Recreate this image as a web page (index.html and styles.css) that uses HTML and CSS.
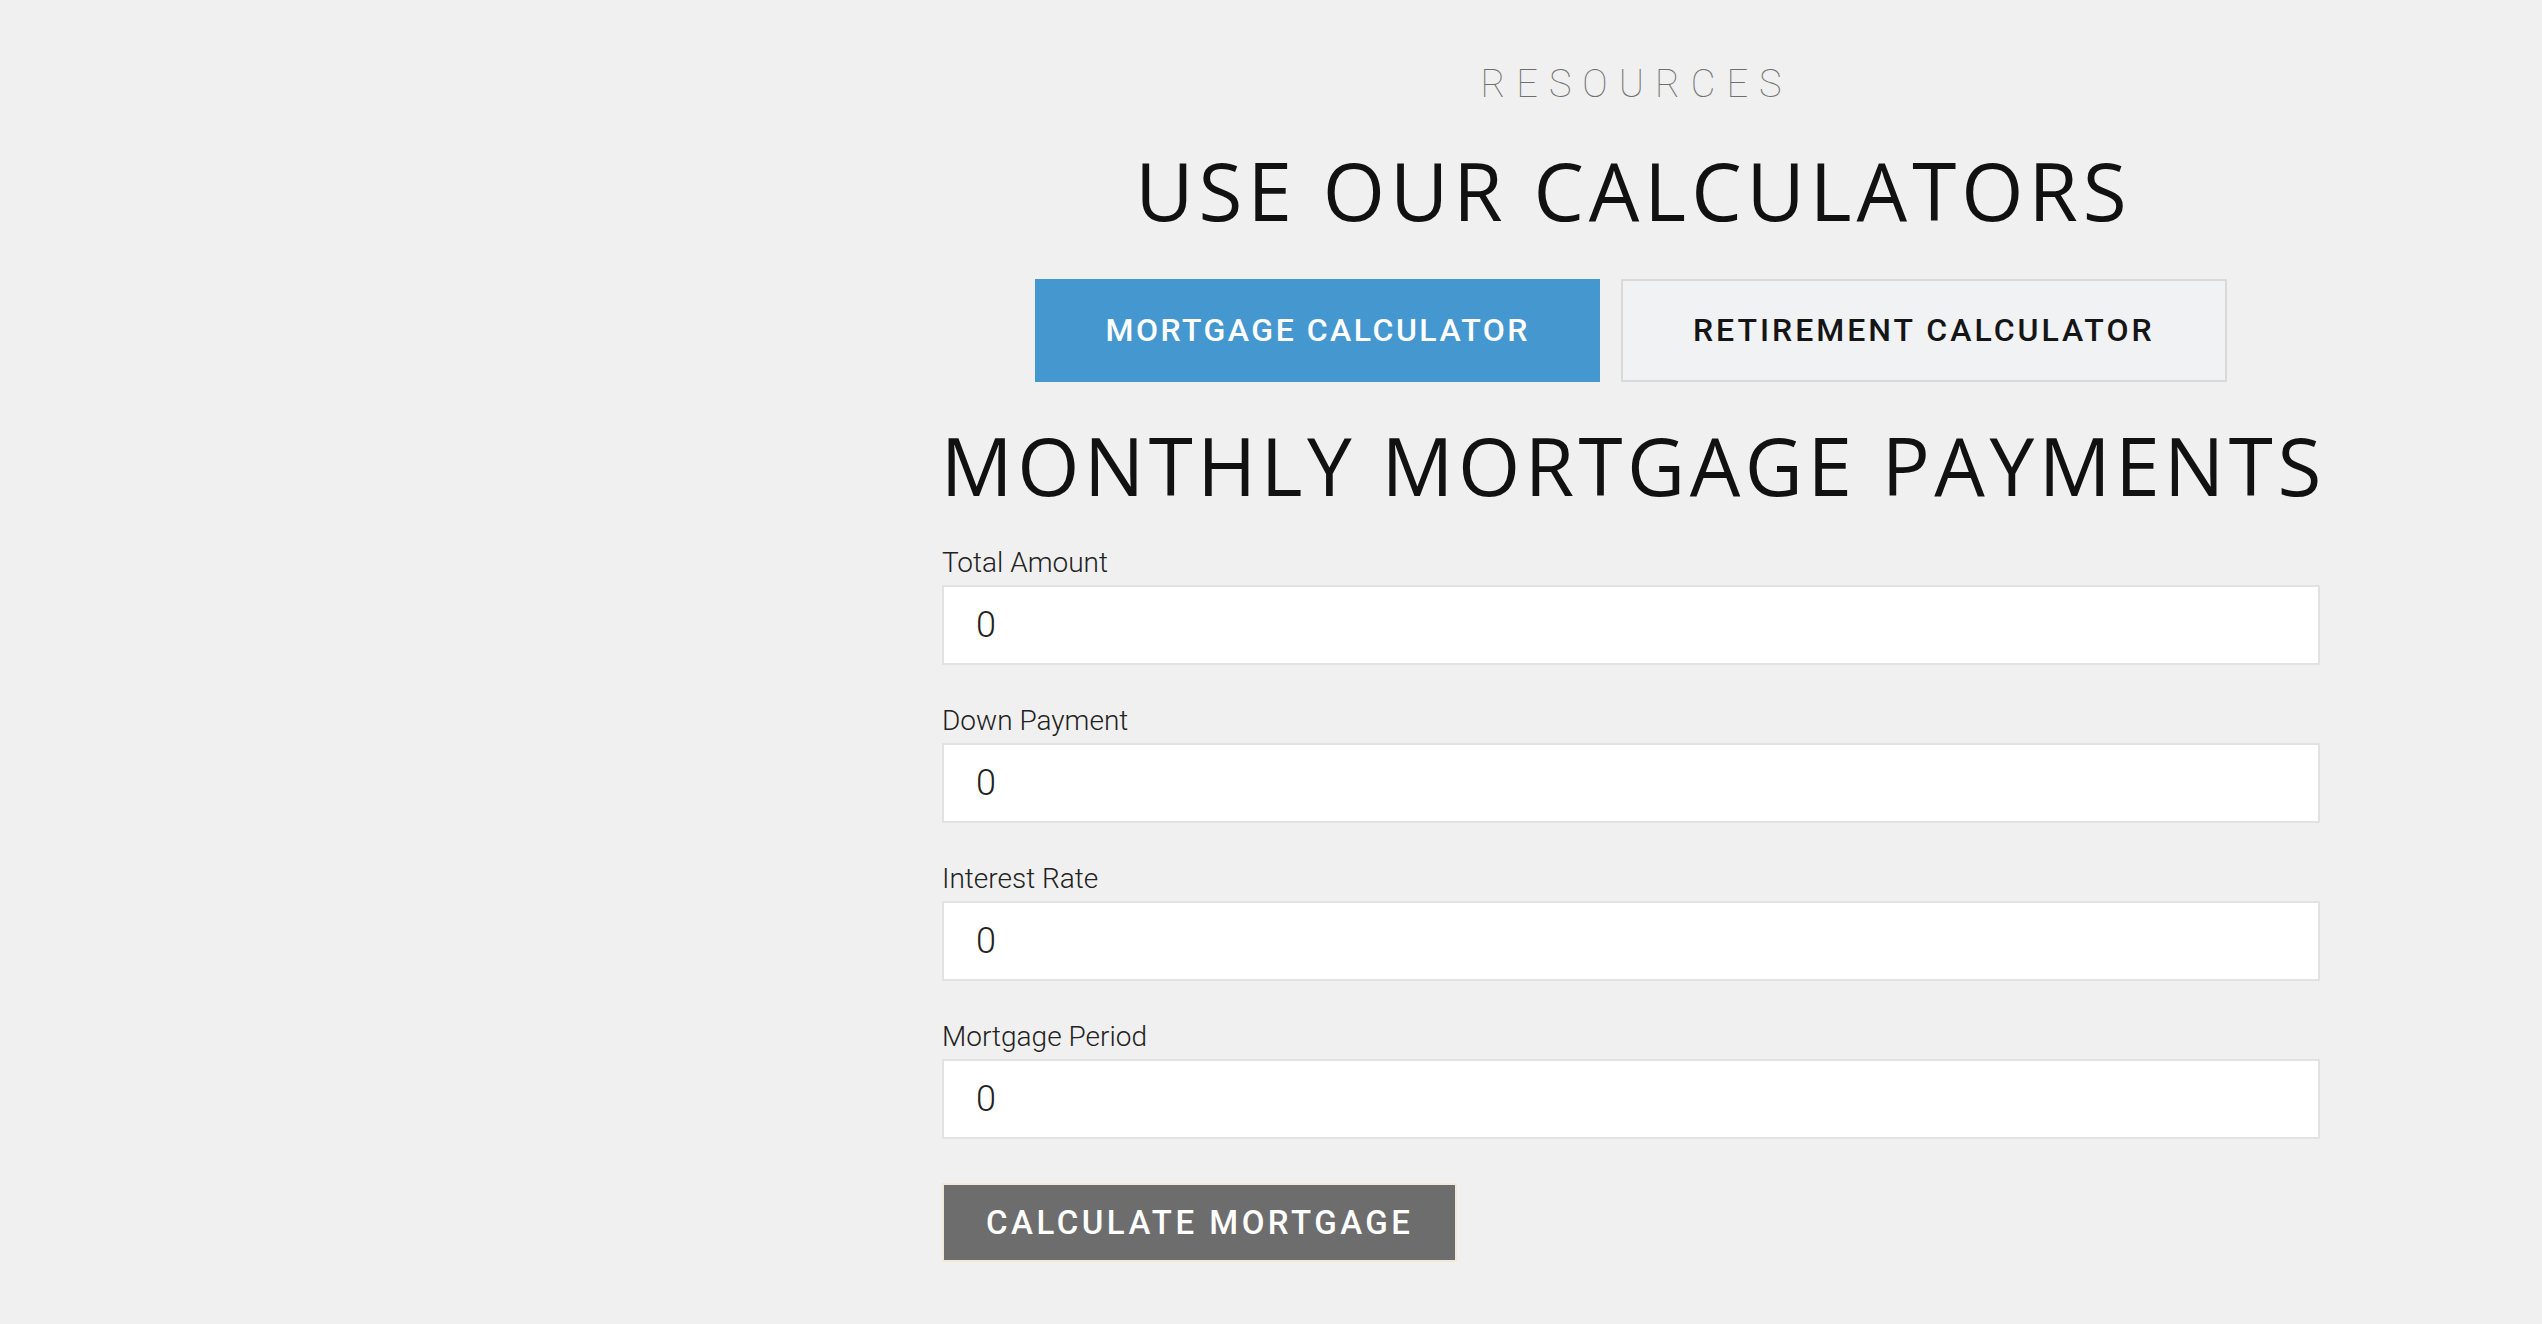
FILE: index.html
```html
<!DOCTYPE html>
<html lang="en">
<head>
<meta charset="utf-8">
<title>Use Our Calculators</title>
<link rel="stylesheet" href="styles.css">
</head>
<body>
<div class="page">
  <aside class="side"></aside>
  <main class="content">
    <p class="eyebrow">RESOURCES</p>
    <h1 class="title">USE OUR CALCULATORS</h1>
    <div class="tabs">
      <button class="tab tab-active" type="button">MORTGAGE CALCULATOR</button>
      <button class="tab" type="button">RETIREMENT CALCULATOR</button>
    </div>
    <h2 class="subtitle">MONTHLY MORTGAGE PAYMENTS</h2>
    <form class="calc">
      <div class="field">
        <label class="label" for="total">Total Amount</label>
        <input class="input" id="total" type="text" value="0">
      </div>
      <div class="field">
        <label class="label" for="down">Down Payment</label>
        <input class="input" id="down" type="text" value="0">
      </div>
      <div class="field">
        <label class="label" for="rate">Interest Rate</label>
        <input class="input" id="rate" type="text" value="0">
      </div>
      <div class="field">
        <label class="label" for="period">Mortgage Period</label>
        <input class="input" id="period" type="text" value="0">
      </div>
      <div class="actions">
        <button class="submit" type="button">CALCULATE MORTGAGE</button>
      </div>
    </form>
  </main>
</div>
</body>
</html>
```
FILE: styles.css
```css
* { box-sizing: border-box; }
html, body { margin: 0; padding: 0; }
body {
  background: #f0f0f0;
  font-family: Roboto, "Liberation Sans", sans-serif;
  color: #111;
}
.page {
  display: grid;
  grid-template-columns: 942px 1378px 1fr;
}
.content {
  display: flex;
  flex-direction: column;
  align-items: center;
  padding-top: 64px;
}
.eyebrow {
  margin: 0;
  font-family: Roboto, sans-serif;
  font-weight: 100;
  font-size: 38px;
  line-height: 40px;
  letter-spacing: 11px;
  margin-right: -11px;
  color: #6f6f6f;
}
.title {
  margin: 41px 0 0;
  font-family: "Open Sans", sans-serif;
  font-weight: 400;
  font-size: 80px;
  line-height: 90px;
  letter-spacing: 5px;
  margin-right: -5px;
  color: #111;
}
.tabs {
  display: flex;
  gap: 21px;
  margin-top: 44px;
}
.tab {
  font-family: Roboto, sans-serif;
  font-weight: 500;
  font-size: 32px;
  line-height: 35px;
  letter-spacing: 2.5px;
  padding: 32px 68px;
  border: 2px solid #d9d9d9;
  background: #f1f2f4;
  color: #151515;
  cursor: pointer;
}
.tab + .tab {
  letter-spacing: 3px;
  padding: 32px 70px;
}
.tab-active {
  background: #4597cf;
  border-color: #4597cf;
  color: #fff;
}
.subtitle {
  margin: 38px 0 0;
  font-family: "Open Sans", sans-serif;
  font-weight: 400;
  font-size: 80px;
  line-height: 90px;
  letter-spacing: 4.5px;
  margin-right: -4.5px;
  color: #111;
  white-space: nowrap;
}
.calc {
  align-self: stretch;
  display: flex;
  flex-direction: column;
  gap: 39px;
  margin-top: 36px;
}
.field {
  display: flex;
  flex-direction: column;
  gap: 5px;
}
.label {
  font-family: Roboto, sans-serif;
  font-weight: 300;
  font-size: 28px;
  line-height: 34px;
  color: #222;
}
.input {
  height: 80px;
  width: 100%;
  border: 2px solid #e2e2e2;
  background: #fff;
  padding: 0 32px;
  font-family: Roboto, sans-serif;
  font-weight: 300;
  font-size: 36px;
  color: #222;
  outline: none;
}
.actions {
  display: flex;
  margin-top: 5px;
}
.submit {
  height: 79px;
  padding: 0 42px;
  border: 2px solid #f2e8da;
  background: #6d6d6d;
  color: #fff;
  font-family: Roboto, sans-serif;
  font-weight: 500;
  font-size: 33px;
  letter-spacing: 3.5px;
  cursor: pointer;
}
```
